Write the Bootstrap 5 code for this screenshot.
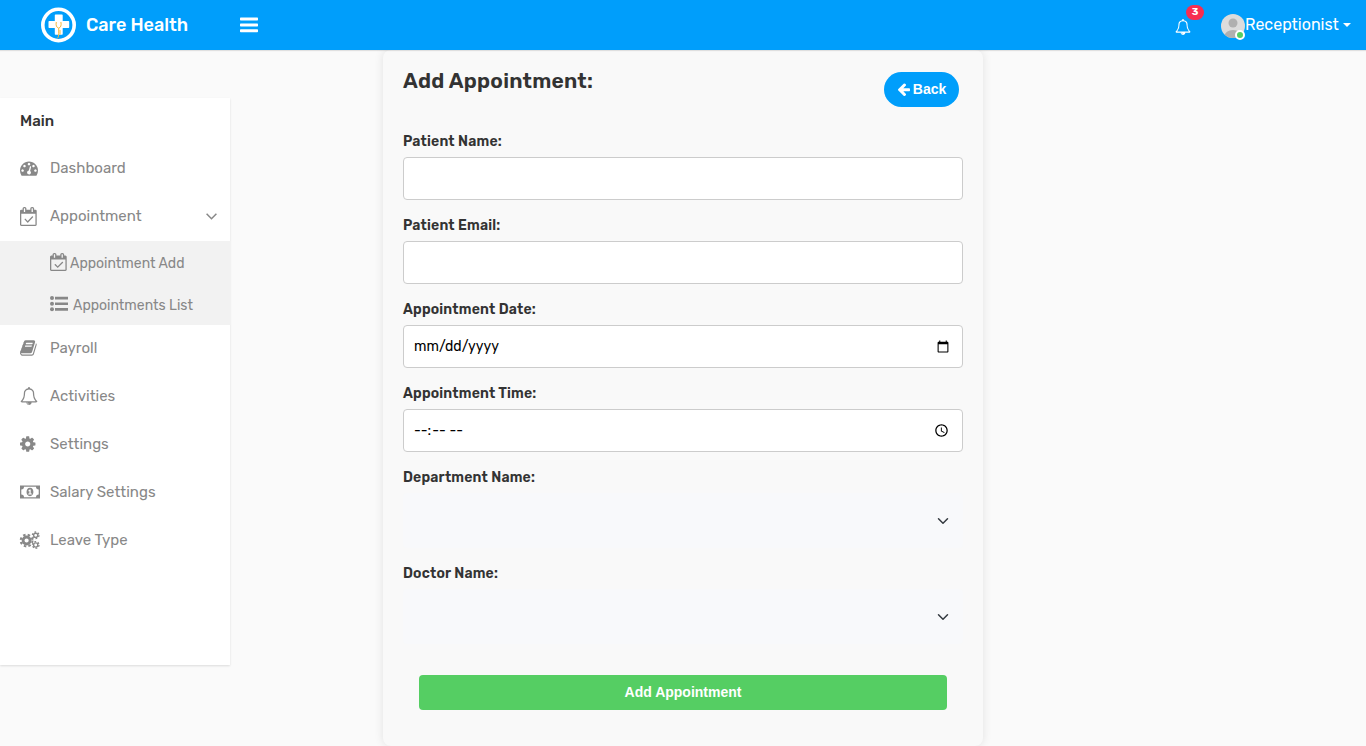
<!DOCTYPE html>
<html lang="en">
<head>
<meta charset="utf-8">
<meta name="viewport" content="width=device-width, initial-scale=1">
<title>Care Health - Add Appointment</title>
<link href="https://cdn.jsdelivr.net/npm/bootstrap@5.3.0/dist/css/bootstrap.min.css" rel="stylesheet">
<style>
body{font-family:Rubik,Inter,Roboto,sans-serif;font-size:14px;background:#fafafa;color:#333;height:746px;overflow:hidden}
.topbar{height:50px;background:#009efb;color:#fff;box-shadow:0 1px 1px rgba(0,0,0,.1);z-index:5}
.brand-name{font-size:18px;font-weight:500;width:102px;white-space:nowrap}
.fa-svg{fill:currentColor;display:block;flex:none;overflow:visible}
.bell-link{margin-right:30px;padding-top:4px}
.count{background:#f62d51;font-size:10px;font-weight:700;width:18px;height:15px;line-height:15px;padding:0;top:-10px;left:11px;border-radius:8px}
.user-name{font-size:16px;font-weight:400;width:94px;white-space:nowrap}
.online{width:10px;height:10px;right:0;bottom:-2px;background:#55ce63;border:2px solid #fff;border-radius:50%}
.side{width:230px;height:567px;margin-top:48px;background:#fff;box-shadow:0 1px 2px rgba(0,0,0,.12);color:#888;font-size:15px}
.side-title{height:46px;color:#333;font-weight:500;padding-left:20px}
.side-item{height:48px;padding:0 13px 0 20px}
.side-item .ico{width:30px;flex:none}
.sub{background:#f2f2f2;padding-left:50px;font-size:14px;width:231px;margin:1px 0 -1px}
.sub .sub-item{height:42px}
.sub .sub-item span{padding-top:2px}
.panel{width:600px;height:696px;margin-left:153px;padding:0 20px;background:#f9f9f9;border-radius:8px;box-shadow:0 0 10px rgba(0,0,0,.1)}
.panel h1{font-size:21px;font-weight:600;line-height:25px;margin:0;padding-top:18px;letter-spacing:.22px}
.back{margin:22px 4px 0 0;width:75px;height:35px;border-radius:50px;background:#009efb;color:#fff;font:700 14px/35px "Liberation Sans",Arial,sans-serif;padding:0}
.flabel{display:block;font-weight:600;height:21px;line-height:21px;margin-bottom:5px;letter-spacing:.17px;font-size:14px}
.field{display:block;width:100%;height:43px;border:1px solid #ccc;border-radius:4px;background:#fff;padding:10px;font-size:14px;color:#000;margin-bottom:15px}
.pick{display:block;width:100%;height:55px;background-color:#f8f9fb;border:0;border-radius:4px;margin-bottom:15px;background-position:right 14px center;background-size:12px}
.save{display:block;width:528px;height:35px;margin:31px auto 0;border:0;border-radius:4px;background:#55ce63;color:#fff;font:700 14px/35px "Liberation Sans",Arial,sans-serif;padding:0}
</style>
</head>
<body>
<svg width="0" height="0" class="position-absolute" aria-hidden="true"><defs>
<path id="cal" d="M1303 964l-512 512q-10 9-23 9t-23-9l-288-288q-9-10-9-23t9-22l46-46q9-9 22-9t23 9l220 220 444-444q10-9 23-9t22 9l46 46q9 9 9 22t-9 23zm-1175 700h1408v-1024h-1408v1024zm384-1216v-288q0-14-9-23t-23-9h-64q-14 0-23 9t-9 23v288q0 14 9 23t23 9h64q14 0 23-9t9-23zm768 0v-288q0-14-9-23t-23-9h-64q-14 0-23 9t-9 23v288q0 14 9 23t23 9h64q14 0 23-9t9-23zm384-64v1280q0 52-38 90t-90 38h-1408q-52 0-90-38t-38-90v-1280q0-52 38-90t90-38h128v-96q0-66 47-113t113-47h64q66 0 113 47t47 113v96h384v-96q0-66 47-113t113-47h64q66 0 113 47t47 113v96h128q52 0 90 38t38 90z"/>
<path id="bell" d="M912 1696q0-16-16-16-59 0-101.5-42.5t-42.500-101.500q0-16-16-16t-16 16q0 73 51.500 124.500t124.500 51.500q16 0 16-16zm-666-288h1300q-266-300-266-832 0-51-24-105t-69-103-121.500-80.500-169.500-31.500-169.500 31.500-121.500 80.500-69 103-24 105q0 532-266 832zm1482 0q0 52-38 90t-90 38h-448q0 106-75 181t-181 75-181-75-75-181h-448q-52 0-90-38t-38-90q50-42 91-88t85-119.500 74.500-158.500 50-206 19.500-260q0-152 117-282.500t307-158.500q-8-19-8-39 0-40 28-68t68-28 68 28 28 68q0 20-8 39 190 28 307 158.500t117 282.500q0 139 19.500 260t50 206 74.500 158.500 85 119.500 91 88z"/>
<path id="cog" d="M1152 896q0-106-75-181t-181-75-181 75-75 181 75 181 181 75 181-75 75-181zm512-109v222q0 12-8 23t-20 13l-185 28q-19 54-39 91 35 50 107 138 10 12 10 25t-9 23q-27 37-99 108t-94 71q-12 0-26-9l-138-108q-44 23-91 38-16 136-29 186-7 28-36 28h-222q-14 0-24.500-8.500t-11.500-21.500l-28-184q-49-16-90-37l-141 107q-10 9-25 9-14 0-25-11-126-114-165-168-7-10-7-23 0-12 8-23 15-21 51-66.500t54-70.500q-27-50-41-99l-183-27q-13-2-21-12.500t-8-23.500v-222q0-12 8-23t19-13l186-28q14-46 39-92-40-57-107-138-10-12-10-24 0-10 9-23 26-36 98.500-107.500t94.500-71.500q13 0 26 10l138 107q44-23 91-38 16-136 29-186 7-28 36-28h222q14 0 24.500 8.500t11.500 21.500l28 184q49 16 90 37l142-107q9-9 24-9 13 0 25 10 129 119 165 170 7 8 7 22 0 12-8 23-15 21-51 66.500t-54 70.500q26 50 41 98l183 28q13 2 21 12.500t8 23.500z"/>
</defs></svg>

<header class="topbar position-relative d-flex align-items-center">
  <svg width="36" height="36" viewBox="0 0 36 36" style="margin-left:41px">
    <circle cx="17.500" cy="18" r="15.700" fill="none" stroke="#fff" stroke-width="3.600"/>
    <path d="M14.500 7.500h6.500q.7 0 .7.700v5.800h5.800q.7 0 .7.700v5.600q0 .7-.7.700h-5.800v6q0 .7-.7.700h-6.500q-.7 0-.7-.7v-6h-5.600q-.7 0-.7-.7v-5.600q0-.7.700-.7h5.600v-5.800q0-.7.700-.7z" fill="#fff"/>
    <path d="M15.300 15q-1 5 2.400 6.200 3.200-1.200 2.200-6.200M17.700 21.200v5.500q0 3-1 4.500M19 23v4.500" fill="none" stroke="#f6b83c" stroke-width="1"/>
  </svg>
  <span class="brand-name" style="margin-left:9px">Care Health</span>
  <svg class="fa-svg" width="19" height="16" viewBox="0 0 19 16" style="margin-left:52px"><rect y="0.500" width="18" height="3" rx=".7"/><rect y="6.500" width="18" height="3" rx=".7"/><rect y="12.300" width="18" height="3" rx=".7"/></svg>
  <div class="ms-auto d-flex align-items-center" style="padding-right:15px">
    <div class="bell-link position-relative"><svg class="fa-svg" width="16" height="16" viewBox="0 0 1792 1792"><use href="#bell"/></svg><span class="badge count position-absolute text-center">3</span></div>
    <div class="position-relative" style="margin-top:2px"><svg class="d-block" width="24" height="24" viewBox="0 0 24 24"><clipPath id="av"><circle cx="12" cy="12" r="12"/></clipPath><g clip-path="url(#av)"><rect width="24" height="24" fill="#dcdcdc"/><circle cx="12" cy="9" r="4.500" fill="#b0b0b0"/><ellipse cx="12" cy="22" rx="8.500" ry="6" fill="#b0b0b0"/></g></svg><span class="online position-absolute"></span></div>
    <span class="user-name">Receptionist</span>
    <svg class="fa-svg" width="8" height="4" viewBox="0 0 8 4" style="margin-left:4px"><path d="M0 0h8l-4 4z"/></svg>
  </div>
</header>

<div class="d-flex align-items-start">
  <nav class="side">
    <div class="side-title d-flex align-items-center"><span>Main</span></div>
    <div class="side-item d-flex align-items-center"><span class="ico"><svg class="fa-svg" width="18" height="18" viewBox="0 0 1792 1792"><path d="M384 1152q0-53-37.500-90.500t-90.500-37.500-90.500 37.500-37.500 90.500 37.500 90.500 90.500 37.500 90.500-37.500 37.500-90.500zm192-448q0-53-37.500-90.500t-90.500-37.500-90.500 37.500-37.500 90.500 37.500 90.500 90.500 37.500 90.500-37.500 37.500-90.500zm428 481l101-382q6-26-7.500-48.500t-38.500-29.500-48 6.500-30 39.500l-101 382q-60 5-107 43.500t-63 98.500q-20 77 20 146t117 89 146-20 89-117q16-60-6-117t-72-91zm660-33q0-53-37.500-90.500t-90.500-37.500-90.500 37.500-37.500 90.500 37.500 90.500 90.500 37.500 90.500-37.500 37.500-90.500zm-640-640q0-53-37.500-90.500t-90.500-37.500-90.500 37.500-37.500 90.500 37.500 90.500 90.500 37.500 90.500-37.500 37.500-90.500zm448 192q0-53-37.500-90.500t-90.500-37.500-90.500 37.500-37.500 90.500 37.500 90.500 90.500 37.500 90.500-37.500 37.500-90.500zm320 448q0 261-141 483-19 29-54 29h-1402q-35 0-54-29-141-221-141-483 0-182 71-348t191-286 286-191 348-71 348 71 286 191 191 286 71 348z"/></svg></span><span>Dashboard</span></div>
    <div class="side-item d-flex align-items-center"><span class="ico"><svg class="fa-svg" width="18" height="19" viewBox="0 0 1792 1792" preserveAspectRatio="none"><use href="#cal"/></svg></span><span>Appointment</span><svg class="ms-auto" width="11" height="7" viewBox="0 0 11 7" fill="none" stroke="#888" stroke-width="1.500"><path d="M.6.8l4.900 4.900L10.400.8"/></svg></div>
    <div class="sub">
      <div class="sub-item d-flex align-items-center"><svg class="fa-svg" width="20" height="18" viewBox="0 0 1992 1792"><use href="#cal"/></svg><span>Appointment Add</span></div>
      <div class="sub-item d-flex align-items-center"><svg class="fa-svg" width="23" height="16" viewBox="0 0 23 16"><circle cx="2" cy="2" r="2"/><circle cx="2" cy="7.700" r="2"/><circle cx="2" cy="13.300" r="2"/><path d="M5 .7h13v2.700H5zM5 6.400h13v2.700H5zM5 12h13v2.700H5z"/></svg><span>Appointments List</span></div>
    </div>
    <div class="side-item d-flex align-items-center"><span class="ico"><svg class="fa-svg" width="18" height="18" viewBox="0 0 1792 1792"><path d="M1639 478q40 57 18 129l-275 906q-19 64-76.500 107.500t-122.500 43.500h-923q-77 0-148.500-53.500t-99.500-131.500q-24-67-2-127 0-4 3-27t4-37q1-8-3-21.500t-3-19.500q2-11 8-21t16.500-23.500 16.500-23.500q23-38 45-91.500t30-91.500q3-10 .5-30t-.5-28q3-11 17-28t17-23q21-36 42-92t25-90q1-9-2.500-32t.5-28q4-13 22-30.500t22-22.500q19-26 42.500-84.500t27.500-96.500q1-8-3-25.500t-2-26.500q2-8 9-18t18-23 17-21q8-12 16.500-30.500t15-35 16-36 19.500-32 26.500-23.500 36-11.500 47.500 5.500l-1 3q38-9 51-9h761q74 0 114 56t18 130l-274 906q-36 119-71.500 153.500t-128.500 34.500h-869q-27 0-38 15-11 16-1 43 24 70 144 70h923q29 0 56-15.500t35-41.500l300-987q7-22 5-57 38 15 59 43zm-1064 2q-4 13 2 22.500t20 9.500h608q13 0 25.500-9.500t16.500-22.500l21-64q4-13-2-22.500t-20-9.500h-608q-13 0-25.500 9.500t-16.500 22.500zm-83 256q-4 13 2 22.500t20 9.500h608q13 0 25.500-9.500t16.500-22.500l21-64q4-13-2-22.500t-20-9.500h-608q-13 0-25.500 9.500t-16.500 22.500z"/></svg></span><span>Payroll</span></div>
    <div class="side-item d-flex align-items-center"><span class="ico"><svg class="fa-svg" width="18" height="18" viewBox="0 0 1792 1792"><use href="#bell"/></svg></span><span>Activities</span></div>
    <div class="side-item d-flex align-items-center"><span class="ico"><svg class="fa-svg" width="18" height="18" viewBox="128 0 1792 1792"><use href="#cog"/></svg></span><span>Settings</span></div>
    <div class="side-item d-flex align-items-center"><span class="ico"><svg class="fa-svg" width="20" height="14" viewBox="0 0 20 14"><path fill-rule="evenodd" d="M0 0.500h20v13H0zM4 1.800A2.700 2.700 0 0 1 1.300 4.500v5A2.700 2.700 0 0 1 4 12.200h12a2.700 2.700 0 0 1 2.700-2.700v-5A2.700 2.700 0 0 1 16 1.800zM10 2.800c4.600 0 4.600 8.400 0 8.400s-4.600-8.400 0-8.400zM10.700 4.500H9.600L8.200 5.700l.7.800.5-.4v2.400H8.300v1h3.500v-1h-1.100z"/></svg></span><span>Salary Settings</span></div>
    <div class="side-item d-flex align-items-center"><span class="ico"><svg class="fa-svg" width="20" height="18" viewBox="0 0 20 18"><path fill="none" stroke="currentColor" stroke-width="2.800" d="M10.100 9.500a3.500 3.500 0 1 1-7 0 3.500 3.500 0 1 1 7 0z"/><path fill="none" stroke="currentColor" stroke-width="2" stroke-dasharray="2.500 2.200" d="M12.500 9.500a5.900 5.900 0 1 1-11.800 0 5.900 5.900 0 1 1 11.800 0z"/><g fill="none" stroke="currentColor"><g stroke-width="1.400"><circle cx="15.700" cy="4.300" r="2.100"/><circle cx="15.700" cy="14" r="2.100"/></g><g stroke-width="1.300" stroke-dasharray="1.800 1.650"><circle cx="15.700" cy="4.300" r="3.300"/><circle cx="15.700" cy="14" r="3.300"/></g></g></svg></span><span>Leave Type</span></div>
  </nav>

  <main class="panel">
    <div class="d-flex justify-content-between align-items-start" style="height:81px"><h1>Add Appointment:</h1>
      <button class="btn back d-flex align-items-center justify-content-center" type="button"><svg class="fa-svg" width="13" height="14" viewBox="64 192 1600 1600" style="margin-right:3px"><path d="M1664 896v128q0 53-32.500 90.500t-84.500 37.500h-704l293 294q38 36 38 90t-38 90l-75 76q-37 37-90 37-52 0-91-37l-651-652q-37-37-37-90 0-52 37-91l651-650q38-38 91-38 52 0 90 38l75 74q38 38 38 91t-38 91l-293 293h704q52 0 84.500 37.500t32.500 90.500z"/></svg>Back</button></div>
    <form>
      <label class="flabel" for="pn">Patient Name:</label><input class="field" id="pn" type="text">
      <label class="flabel" for="pe">Patient Email:</label><input class="field" id="pe" type="email">
      <label class="flabel" for="ad">Appointment Date:</label><input class="field" id="ad" type="date">
      <label class="flabel" for="at">Appointment Time:</label><input class="field" id="at" type="time">
      <label class="flabel" for="dn">Department Name:</label><select class="form-select pick" id="dn"></select>
      <label class="flabel" for="dr">Doctor Name:</label><select class="form-select pick" id="dr"></select>
      <button class="btn save" type="button">Add Appointment</button>
    </form>
  </main>
</div>
<script src="https://cdn.jsdelivr.net/npm/bootstrap@5.3.0/dist/js/bootstrap.bundle.min.js"></script>
</body>
</html>
